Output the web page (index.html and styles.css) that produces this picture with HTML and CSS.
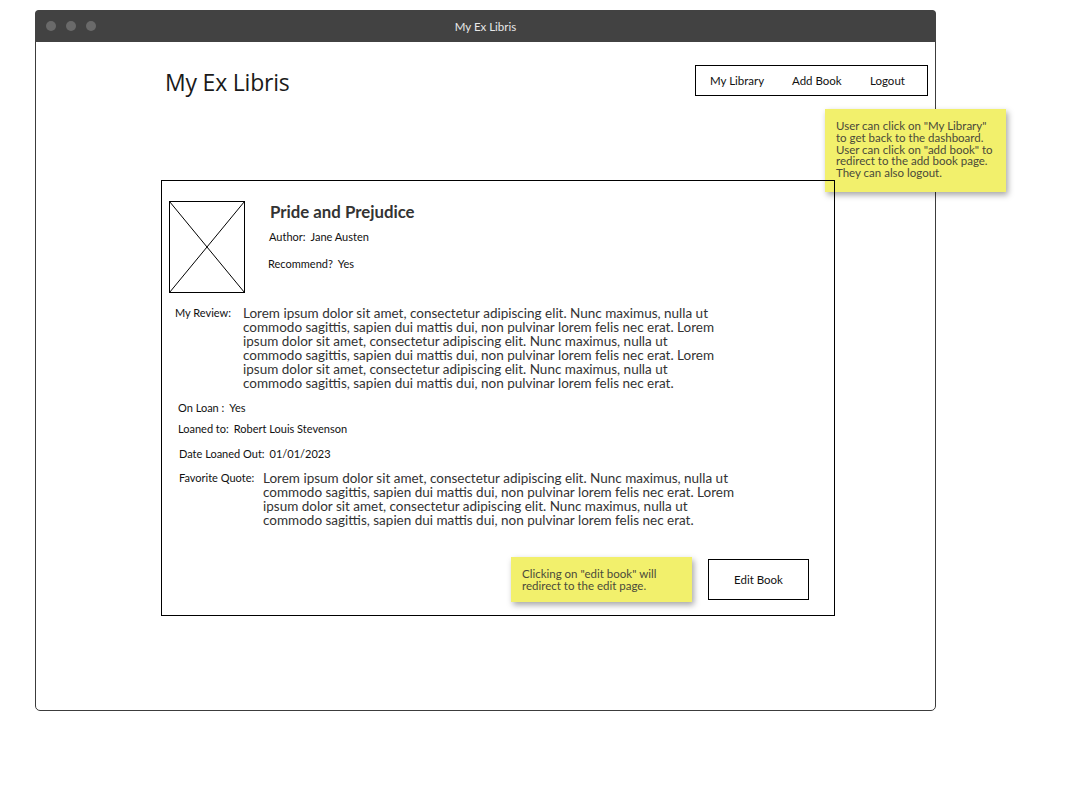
FILE: index.html
```html
<!DOCTYPE html>
<html>
<head>
<meta charset="utf-8">
<link rel="stylesheet" href="styles.css">
</head>
<body>
<div class="window">
  <div class="titlebar">
    <div class="dots"><span class="dot"></span><span class="dot"></span><span class="dot"></span></div>
    <div class="wtitle">My Ex Libris</div>
  </div>
  <div class="content">
    <header class="header">
      <h1 class="brand">My Ex Libris</h1>
      <nav class="nav">
        <span class="nav-item">My Library</span>
        <span class="nav-item">Add Book</span>
        <span class="nav-item">Logout</span>
      </nav>
    </header>
    <div class="note note-nav">User can click on "My Library"<br>to get back to the dashboard.<br>User can click on "add book" to<br>redirect to the add book page.<br>They can also logout.</div>

    <section class="card">
      <div class="top">
        <svg class="cover" width="76" height="92" viewBox="0 0 76 92">
          <rect x="0.5" y="0.5" width="75" height="91" fill="#fff" stroke="#000"/>
          <line x1="0.5" y1="0.5" x2="75.5" y2="91.5" stroke="#000" stroke-width="1"/>
          <line x1="75.5" y1="0.5" x2="0.5" y2="91.5" stroke="#000" stroke-width="1"/>
        </svg>
        <div class="meta">
          <h2 class="title">Pride and Prejudice</h2>
          <div class="field f-author"><span class="label">Author:</span><span>Jane Austen</span></div>
          <div class="field f-rec"><span class="label">Recommend?</span><span>Yes</span></div>
        </div>
      </div>

      <div class="long review">
        <div class="label small">My Review:</div>
        <p class="para">Lorem ipsum dolor sit amet, consectetur adipiscing elit. Nunc maximus, nulla ut<br>commodo sagittis, sapien dui mattis dui, non pulvinar lorem felis nec erat. Lorem<br>ipsum dolor sit amet, consectetur adipiscing elit. Nunc maximus, nulla ut<br>commodo sagittis, sapien dui mattis dui, non pulvinar lorem felis nec erat. Lorem<br>ipsum dolor sit amet, consectetur adipiscing elit. Nunc maximus, nulla ut<br>commodo sagittis, sapien dui mattis dui, non pulvinar lorem felis nec erat.</p>
      </div>

      <div class="field f-loan"><span class="label">On Loan :</span><span>Yes</span></div>
      <div class="field f-to"><span class="label">Loaned to:</span><span>Robert Louis Stevenson</span></div>
      <div class="field f-date"><span class="label">Date Loaned Out:</span><span>01/01/2023</span></div>

      <div class="long quote">
        <div class="label small">Favorite Quote:</div>
        <p class="para">Lorem ipsum dolor sit amet, consectetur adipiscing elit. Nunc maximus, nulla ut<br>commodo sagittis, sapien dui mattis dui, non pulvinar lorem felis nec erat. Lorem<br>ipsum dolor sit amet, consectetur adipiscing elit. Nunc maximus, nulla ut<br>commodo sagittis, sapien dui mattis dui, non pulvinar lorem felis nec erat.</p>
      </div>

      <div class="actions">
        <div class="note note-edit">Clicking on "edit book" will<br>redirect to the edit page.</div>
        <button class="btn">Edit Book</button>
      </div>
    </section>
  </div>
</div>
</body>
</html>
```

FILE: styles.css
```css
* { box-sizing: border-box; }
html, body { margin: 0; padding: 0; background: #fff; }
body {
  font-family: Lato, "Liberation Sans", sans-serif;
  color: #222;
  width: 1070px;
  height: 810px;
  position: relative;
}
.window {
  position: relative;
  margin: 10px 0 0 35px;
  width: 901px;
  height: 701px;
  border: 1px solid #3c3c3c;
  border-radius: 5px;
}
.titlebar {
  height: 32px;
  background: #424242;
  border-radius: 4px 4px 0 0;
  margin: -1px -1px 0 -1px;
  display: flex;
  align-items: center;
  position: relative;
}
.dots { display: flex; gap: 10px; padding-left: 11px; }
.dot { width: 10px; height: 10px; border-radius: 50%; background: #6a6a6a; }
.wtitle {
  position: absolute;
  left: 0; right: 0; top: 0; bottom: 0;
  display: flex; align-items: center; justify-content: center;
  color: #e8e8e8;
  font-size: 11.5px;
}
.content { position: relative; }
.header {
  display: flex;
  justify-content: space-between;
  align-items: flex-start;
  padding: 23px 7px 0 129px;
}
.brand {
  margin: 1px 0 0 0;
  font-family: "Open Sans", "Noto Sans", sans-serif;
  font-weight: 400;
  font-size: 23px;
  color: #1a1a1a;
  letter-spacing: -0.2px;
}
.nav {
  width: 233px;
  height: 31px;
  border: 1px solid #000;
  display: flex;
  align-items: center;
  padding-left: 14px;
  font-size: 11.5px;
  color: #111;
}
.nav-item:nth-child(1) { width: 82px; }
.nav-item:nth-child(2) { width: 78px; }
.note {
  background: #f2f06c;
  color: #4a4a3a;
  font-size: 11.5px;
  line-height: 11.7px;
  box-shadow: 2px 3px 6px rgba(0,0,0,0.35);
  white-space: nowrap;
}
.note-nav {
  position: absolute;
  left: 789px;
  top: 67px;
  width: 181px;
  height: 83px;
  padding: 11px 8px 0 11px;
  line-height: 11.8px;
}
.card {
  margin: 82px 0 0 125px;
  width: 674px;
  height: 436px;
  border: 1px solid #000;
  padding: 20px 0 0 7px;
  position: relative;
}
.top { display: flex; }
.cover { display: block; flex: none; }
.meta { padding-left: 24px; }
.title {
  margin: 1px 0 0 1px;
  font-size: 16.8px;
  font-weight: 700;
  color: #333;
  line-height: 20px;
}
.field {
  font-size: 11px;
  color: #111;
  display: flex;
  gap: 5px;
  line-height: 13px;
}
.f-author { margin-top: 8px; }
.f-rec { margin-top: 14px; margin-left: -1px; }
.long { display: flex; }
.review { margin-top: 13px; padding-left: 6px; }
.review .label { width: 68px; }
.small { font-size: 11px; color: #111; line-height: 14px; flex: none; }
.para {
  margin: 0;
  font-size: 13.5px;
  line-height: 14px;
  color: #333;
  white-space: nowrap;
}
.f-loan { margin-top: 11px; padding-left: 9px; }
.f-to { margin-top: 8px; padding-left: 9px; }
.f-date { margin-top: 12px; padding-left: 10px; }
.quote { margin-top: 11px; padding-left: 10px; }
.quote .label { width: 84px; }
.actions {
  position: absolute;
  left: 349px;
  top: 376px;
  display: flex;
  align-items: flex-start;
}
.note-edit {
  width: 181px;
  height: 45px;
  padding: 11px 8px 0 11px;
}
.btn {
  margin: 2px 0 0 16px;
  width: 101px;
  height: 41px;
  border: 1px solid #000;
  background: #fff;
  font-family: Lato, "Liberation Sans", sans-serif;
  font-size: 11.5px;
  color: #111;
  padding: 0;
}
```
